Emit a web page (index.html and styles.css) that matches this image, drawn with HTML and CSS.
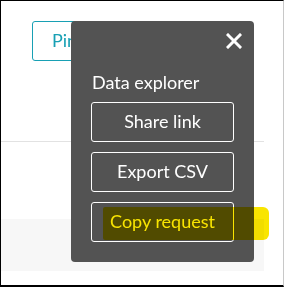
FILE: index.html
```html
<!DOCTYPE html>
<html lang="en">
<head>
  <meta charset="UTF-8">
  <title>Data explorer menu</title>
  <link rel="stylesheet" href="styles.css">
</head>
<body>
  <div class="frame">
    <div class="toolbar">
      <button class="pin-btn">Pin</button>
    </div>
    <div class="divider"></div>
    <div class="spacer"></div>
    <div class="grey-band"></div>

    <div class="popover">
      <div class="popover-head">
        <span class="close">
          <svg width="16" height="16" viewBox="0 0 16 16">
            <path d="M2 2 L14 14 M14 2 L2 14" stroke="#fff" stroke-width="3" stroke-linecap="square"/>
          </svg>
        </span>
      </div>
      <div class="popover-title">Data explorer</div>
      <button class="menu-btn">Share link</button>
      <button class="menu-btn">Export CSV</button>
      <button class="menu-btn">Copy request</button>
    </div>

    <div class="highlight"></div>
  </div>
</body>
</html>
```

FILE: styles.css
```css
body {
  margin: 0;
  font-family: Lato, 'Open Sans', sans-serif;
  background: #fff;
}

.frame {
  position: relative;
  width: 284px;
  height: 287px;
  box-sizing: border-box;
  border-top: 1px solid #000;
  border-left: 1px solid #000;
  border-bottom: 2px solid #000;
  border-right: 1px solid #c8c8c8;
  background: #fff;
  overflow: hidden;
}

.toolbar {
  height: 140px;
  box-sizing: border-box;
  padding: 20px 0 0 31px;
}

.pin-btn {
  width: 90px;
  height: 40px;
  border: 1px solid #18a0b4;
  border-radius: 3px;
  background: #fff;
  color: #18a0b4;
  font-family: inherit;
  font-size: 18px;
  text-align: left;
  padding: 0 0 3px 19px;
}

.divider {
  width: 263px;
  height: 1px;
  background: #e2e2e2;
}

.spacer {
  height: 77px;
}

.grey-band {
  width: 263px;
  height: 52px;
  background: #f7f7f7;
}

.popover {
  position: absolute;
  left: 70px;
  top: 20px;
  width: 183px;
  height: 241px;
  box-sizing: border-box;
  padding: 12px 20px 20px;
  background: #535353;
  border-radius: 4px;
  display: flex;
  flex-direction: column;
  gap: 10px;
}

.popover-head {
  display: flex;
  justify-content: flex-end;
  height: 16px;
  margin-right: -8px;
}

.close {
  display: block;
  width: 16px;
  height: 16px;
}

.popover-title {
  color: #fff;
  font-size: 18px;
  margin: 12px 0 -1px 1px;
  line-height: 22px;
}

.menu-btn {
  height: 40px;
  flex: none;
  border: 1px solid #fff;
  border-radius: 3px;
  background: transparent;
  color: #fff;
  font-family: inherit;
  font-size: 18px;
  padding: 0 0 3px;
}

.highlight {
  position: absolute;
  left: 102px;
  top: 206px;
  width: 166px;
  height: 33px;
  background: #f9e500;
  mix-blend-mode: multiply;
  border-radius: 2px 6px 6px 2px;
}
```
